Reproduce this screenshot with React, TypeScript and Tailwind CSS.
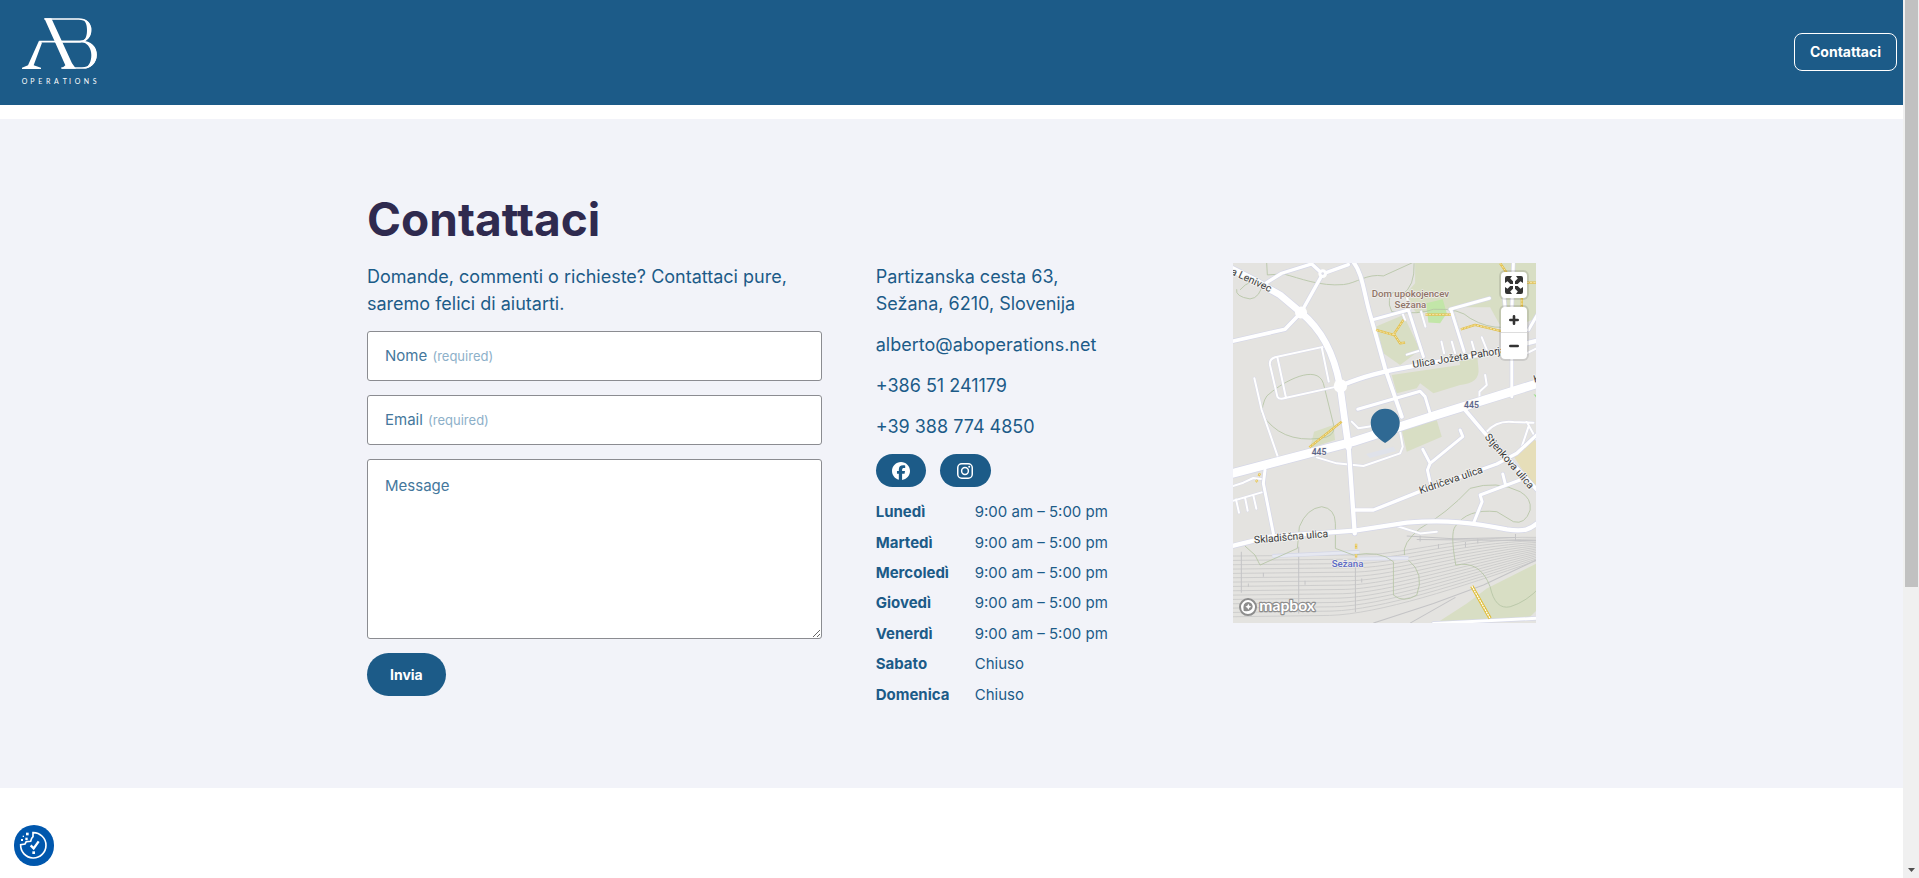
import { FaFacebook } from 'react-icons/fa6';

const hours = [
  { day: 'Lunedì', time: '9:00 am – 5:00 pm' },
  { day: 'Martedì', time: '9:00 am – 5:00 pm' },
  { day: 'Mercoledì', time: '9:00 am – 5:00 pm' },
  { day: 'Giovedì', time: '9:00 am – 5:00 pm' },
  { day: 'Venerdì', time: '9:00 am – 5:00 pm' },
  { day: 'Sabato', time: 'Chiuso' },
  { day: 'Domenica', time: 'Chiuso' },
];

const Logo = () => {
  return (
    <svg viewBox="60 42 240 225" className="h-[75px] w-20" fill="none" stroke="#fff" role="img" aria-label="AB Operations">
      <path d="M133 57H236C258 57 272 70 272 90C272 110 258 123 240 125H118" strokeWidth="5" />
      <path d="M184 125H245C272 125 288 142 288 164C288 188 270 204 246 204H184" strokeWidth="5" />
      <path d="M246 57C264 59 273 73 273 90C273 107 264 120 252 125C276 127 290 144 290 164C290 186 276 202 255 206C268 196 274 184 274 165C274 146 265 132 248 125C258 117 261 106 261 90C261 73 256 62 246 57Z" fill="#fff" stroke="none" />
      <path d="M133 55H154L216 190L228 206H184L196 196Z" fill="#fff" stroke="none" />
      <path d="M117 122L84 196L66 203V207H123V203L101 196L126 128Z" fill="#fff" stroke="none" />
      <text
        x="65 91 115 138 162 188 207 224 251 278"
        y="252"
        fill="#fff"
        stroke="none"
        fontSize="21"
        className="font-['Lato']">
        OPERATIONS
      </text>
    </svg>
  );
};

export const Header = () => {
  return (
    <header className="flex items-center justify-between bg-[#1c5b88] pt-3.5 pr-1.5 pb-4 pl-5">
      <a href="#">
        <Logo />
      </a>
      <a
        href="#contatti"
        className="rounded-lg border border-white px-[15px] text-sm leading-9 font-bold text-white">
        Contattaci
      </a>
    </header>
  );
};

const Field = ({ id, label, type }: { id: string; label: string; type: string }) => {
  return (
    <div className="flex h-[50px] items-center rounded-[3px] border border-[#8b8c91] bg-white px-[17px]">
      <label htmlFor={id} className="text-[15px] text-[#44779c]">
        {label} <span className="ml-px text-[13px] text-[#8db0c9]">(required)</span>
      </label>
      <input id={id} type={type} required className="min-w-0 flex-1 self-stretch outline-none" />
    </div>
  );
};

const ContactForm = () => {
  return (
    <form className="flex flex-col items-start gap-3.5">
      <p>
        Domande, commenti o richieste? Contattaci pure, saremo felici di aiutarti.
      </p>
      <div className="flex w-full flex-col gap-3.5">
        <Field id="nome" label="Nome" type="text" />
        <Field id="email" label="Email" type="email" />
        <div className="relative">
          <label htmlFor="message" className="absolute top-[15px] left-[18px] text-[15px] leading-6 text-[#44779c]">
            Message
          </label>
          <textarea
            id="message"
            className="block h-[180px] w-full resize rounded-[3px] border border-[#8b8c91] bg-white px-[17px] py-3.5 outline-none"
          />
        </div>
      </div>
      <button type="submit" className="h-[43px] rounded-full bg-[#1c5b88] px-[23px] text-sm font-bold text-white">
        Invia
      </button>
    </form>
  );
};

const ContactInfo = () => {
  return (
    <div className="flex flex-col gap-3.5">
      <p>
        Partizanska cesta 63,
        <br />
        Sežana, 6210, Slovenija
      </p>
      <a href="mailto:alberto@aboperations.net">alberto@aboperations.net</a>
      <a href="tel:+38651241179">+386 51 241179</a>
      <a href="tel:+393887744850">+39 388 774 4850</a>
      <div className="flex gap-3.5">
        <a
          href="#"
          aria-label="Facebook"
          className="flex h-[33px] w-[50px] items-center justify-center rounded-full bg-[#1c5b88] text-white">
          <FaFacebook size={18} />
        </a>
        <a
          href="#"
          aria-label="Instagram"
          className="flex h-[33px] w-[51px] items-center justify-center rounded-full bg-[#1c5b88] text-white">
          <svg viewBox="0 0 16 16" className="size-4" fill="none" stroke="currentColor" strokeWidth="1.5">
            <rect x="0.75" y="0.75" width="14.5" height="14.5" rx="4" />
            <circle cx="8" cy="8" r="3.4" />
            <circle cx="12.2" cy="3.8" r="1" fill="currentColor" stroke="none" />
          </svg>
        </a>
      </div>
      <table className="-mt-1 h-[213px] self-start text-[15px] leading-6">
        <tbody>
          {hours.map(({ day, time }) => (
            <tr key={day}>
              <th scope="row" className="w-[99px] text-left font-bold">
                {day}
              </th>
              <td>{time}</td>
            </tr>
          ))}
        </tbody>
      </table>
    </div>
  );
};

// main roads, drawn as a pale casing with a white line on top
const roads = [
  { d: 'M20 50L100 90L180 135L243 188C300 235 340 300 360 408L385 590', w: 20 },
  { d: 'M0 680L400 575L640 498L980 392', w: 26 },
  { d: 'M243 188L308 72L385 44', w: 10 },
  { d: 'M308 72L275 42L185 70L140 98', w: 10 },
  { d: 'M20 278L195 238L243 188', w: 11 },
  { d: 'M395 30C430 70 430 130 452 200L495 355L545 500', w: 12 },
  { d: 'M360 408C430 380 480 365 600 345L800 310L960 270', w: 13 },
  { d: 'M385 580L404 850', w: 13 },
  { d: 'M20 892L150 860L404 842L560 818C680 808 760 818 860 838C910 846 930 840 960 812', w: 13 },
  { d: 'M404 780H460L600 724L830 642L890 610L960 545', w: 10 },
  { d: 'M455 210L565 180L610 320', w: 9 },
  { d: 'M690 178L808 145M692 178L732 305', w: 9 },
  { d: 'M875 440V180L880 30', w: 9 },
  { d: 'M413 478L600 424L615 440L630 490', w: 9 },
  { d: 'M735 480L790 545L960 730', w: 11 },
  { d: 'M608 598L630 640L728 560L720 540M630 640L622 660L632 705', w: 9 },
  { d: 'M760 820L786 755L780 735L900 690M855 700L848 672', w: 9 },
  { d: 'M160 850L130 700L135 660', w: 9 },
  { d: 'M640 1120L960 1104M925 240L960 180M850 120L855 175', w: 9 },
];

const lanes = [
  'M312 290L165 322Q147 328 150 345L172 440Q178 450 195 444L350 410M172 322L198 444M305 292L326 395',
  'M103 385L125 480L175 625M39 752L125 727M48 748L57 788M75 742L83 782M100 736L109 776M39 708L70 698L100 684L130 688',
  'M290 622L350 640L430 648L540 610L548 590L540 545M395 515L415 535L520 518',
  'M800 545Q830 510 880 516L940 518M920 516L950 570M905 590L925 530',
  'M603 185L616 230M664 275L672 310M695 275L705 310M785 262L800 300M755 275L765 310M560 314L605 300M795 375L800 405L778 425V445',
  'M530 828L600 850L650 845M545 185L555 210M560 140L570 180M900 320L960 290',
];

const trails = [
  'M140 39L142 75L190 72C240 85 300 110 370 104C410 100 440 70 490 78L578 38',
  'M60 120Q90 85 130 95Q120 145 90 147Q45 140 50 118',
  'M582 40Q585 110 545 135Q505 110 508 165L515 185Q600 195 640 178Q720 175 750 205Q800 235 850 232',
  'M150 430C190 395 290 340 310 400L342 530Q345 560 300 565Q180 580 125 490Q130 440 150 430',
  'M75 888L105 915L120 945L232 895L238 830Q260 775 305 770Q345 775 346 820V895L400 915Q480 900 520 935V1035Q550 1060 590 1035Q615 970 565 930',
  'M553 915Q545 880 600 835Q680 790 750 715Q830 690 900 725Q935 745 930 780Q915 825 880 815L830 785Q740 775 705 830Q690 850 707 945Q780 930 810 1010Q825 1080 870 1070Q920 1055 960 1010',
];

const footways = [
  'M468 240L520 255L550 210M520 250L540 280L555 278',
  'M722 238L765 225L850 245',
  'M905 175V140M840 40L880 98H960',
  'M268 592L365 515',
  'M408 881V897M408 912V922M120 670L116 678M108 690L112 696',
  'M616 194H692',
];

const yardTracks = Array.from({ length: 15 }, (_, i) => 918 + i * 13);

const parks = [
  'M585 38H960V200L850 245L720 240L700 175L590 190L550 140L585 100Z',
  'M468 230L550 195L600 300L540 345L490 310Z',
  'M515 375L720 345L715 320L770 305L775 355Q780 400 720 405L640 430L600 400L590 415L530 430Z',
  'M545 540L650 510L665 560L560 605Z',
  'M282 545L340 525L345 570L270 595Z',
  'M800 1015L960 935V1070L930 1100L640 1125L740 1060Z',
];

const Map = () => {
  return (
    <div className="relative h-[360px] overflow-hidden bg-[#e4e3e0]">
      <svg
        viewBox="39 39 909 1080"
        preserveAspectRatio="xMidYMid slice"
        className="size-full font-['Roboto']"
        fill="none"
        strokeLinejoin="round"
        role="img"
        aria-label="Mappa di Sežana">
        {parks.map((d) => (
          <path key={d} d={d} fill="#d8dec4" />
        ))}
        <path d="M618 160L668 148L680 190L660 220L625 218Z" fill="#c2e6a8" />
        <path d="M940 432L960 440V460Z" fill="#9be08a" />
        <path d="M878 615L960 555V720L920 680Z" fill="#e6deb9" />
        <path d="M700 172H810L850 245L740 300L720 240Z" fill="#e4e3e0" />

        {yardTracks.map((y, i) => (
          <path
            key={y}
            d={`M39 ${y}L${440 - i * 8} ${y - 4}C${560 - i * 6} ${y - 8} ${720} ${y - 60 - i * 2} 948 ${862 + i * 5}`}
            stroke="#c9c9c9"
            strokeWidth="2.5"
          />
        ))}
        <path d="M560 858L700 866L886 862M590 868L948 872M64 905V1028M236 890V1090M406 930V1086M460 1119L640 1060L790 1005L948 930M570 1119L706 1042" stroke="#c4c4c6" strokeWidth="3" />
        <path d="M600 856V874M655 882V895M736 876V892M773 865V880M886 852V872M130 968V980M255 992V1004M425 985V997M85 1000V1010" stroke="#c4c4c6" strokeWidth="3" />
        <path d="M157 918L418 906M410 926L565 924" stroke="#d3d6e6" strokeWidth="12" />
        <path d="M157 918L418 906M410 926L565 924" stroke="#e6e8f1" strokeWidth="8" />
        <path d="M438 612L520 590L528 603L450 624Z" fill="#dfe2ea" />

        {trails.map((d) => (
          <path key={d} d={d} stroke="#b5c4a4" strokeWidth="2.5" />
        ))}
        {lanes.map((d) => (
          <g key={d} strokeLinecap="round">
            <path d={d} stroke="#d9dae8" strokeWidth="9" />
            <path d={d} stroke="#fff" strokeWidth="6" />
          </g>
        ))}
        {roads.map(({ d, w }) => (
          <path key={d} d={d} stroke="#d5d7e8" strokeWidth={w + 4} strokeLinecap="round" />
        ))}
        {roads.map(({ d, w }) => (
          <path key={d} d={d} stroke="#fff" strokeWidth={w} strokeLinecap="round" />
        ))}
        <circle cx="308" cy="71" r="13" fill="#fff" />
        <circle cx="308" cy="71" r="4" fill="#dcdde8" />
        <circle cx="243" cy="188" r="18" fill="#fff" />
        <circle cx="361" cy="408" r="20" fill="#fff" />
        {footways.map((d) => (
          <g key={d}>
            <path d={d} stroke="#e2c04c" strokeWidth="7" />
            <path d={d} stroke="#fdf6da" strokeWidth="2" strokeDasharray="7 3" />
          </g>
        ))}
        <path d="M755 1008L810 1105" stroke="#e0bd35" strokeWidth="10" />
        <path d="M755 1008L810 1105" stroke="#fff" strokeWidth="4" strokeDasharray="6 2" />

        <g fontSize="31" fill="#3c3c3c" stroke="#f3f3f1" strokeWidth="5" className="[paint-order:stroke]">
          <text transform="translate(31 72) rotate(25)">a Lenivec</text>
          <text transform="translate(579 354) rotate(-9)">Ulica Jožeta Pahorja</text>
          <text transform="translate(601 732) rotate(-19)">Kidričeva ulica</text>
          <text transform="translate(792 562) rotate(49)">Stjenkova ulica</text>
          <text transform="translate(103 880) rotate(-5)">Skladiščna ulica</text>
          <text transform="translate(943 398) rotate(-15)">K</text>
        </g>
        <g fontSize="29" fontWeight="500" stroke="#f0efec" strokeWidth="4" className="[paint-order:stroke]">
          <g fill="#8f7468" textAnchor="middle">
            <text x="571" y="140">Dom upokojencev</text>
            <text x="571" y="173">Sežana</text>
          </g>
          <g fill="#5a6288" fontSize="26">
            <text x="732" y="473">445</text>
            <text x="275" y="616">445</text>
          </g>
          <text x="335" y="950" fill="#5d6bc5">Sežana</text>
        </g>

        <path
          d="M495 476C470 476 452 495 452 518C452 548 474 564 495 579C516 564 539 548 539 518C539 495 521 476 495 476Z"
          fill="#2f6993"
        />

        <circle cx="84" cy="1071" r="24" fill="#fff" stroke="#8d8d8d" strokeWidth="6" />
        <path d="M71 1083Q66 1058 84 1056Q98 1058 98 1070Q96 1086 71 1083Z" fill="#8d8d8d" />
        <path d="M85 1061L88 1067L94 1070L88 1073L85 1079L82 1073L76 1070L82 1067Z" fill="#fff" />
        <text
          x="118"
          y="1082"
          fontSize="47"
          fontWeight="700"
          fill="#fff"
          stroke="#8d8d8d"
          strokeWidth="7"
          className="font-['Lato'] [paint-order:stroke]">
          mapbox
        </text>
      </svg>

      <div className="absolute top-[9px] right-[9px] flex flex-col gap-[9px] text-[#333]">
        <button
          type="button"
          aria-label="Schermo intero"
          className="flex size-[26px] items-center justify-center rounded-sm bg-white shadow-[0_0_0_2px_rgba(0,0,0,0.1)]">
          <svg viewBox="0 0 18 18" className="size-[18px]" fill="currentColor">
            <path d="M0 7V2Q0 0 2 0H7L5.200 2.500L8 5.300V8H5.300L2.500 5.200Z" />
            <path d="M18 7V2Q18 0 16 0H11L12.800 2.500L10 5.300V8H12.700L15.500 5.200Z" />
            <path d="M0 11V16Q0 18 2 18H7L5.200 15.500L8 12.700V10H5.300L2.500 12.800Z" />
            <path d="M18 11V16Q18 18 16 18H11L12.800 15.500L10 12.700V10H12.700L15.500 12.800Z" />
          </svg>
        </button>
        <div className="flex flex-col divide-y divide-[#ddd] rounded-sm bg-white shadow-[0_0_0_2px_rgba(0,0,0,0.1)]">
          <button type="button" aria-label="Ingrandisci" className="flex size-[26px] items-center justify-center">
            <svg viewBox="0 0 10 10" className="size-2.5" stroke="currentColor" strokeWidth="2.6" strokeLinecap="round">
              <path d="M5 1.300V8.700M1.300 5H8.700" />
            </svg>
          </button>
          <button type="button" aria-label="Riduci" className="flex h-[26px] items-center justify-center">
            <svg viewBox="0 0 10 10" className="size-2.5" stroke="currentColor" strokeWidth="2.6" strokeLinecap="round">
              <path d="M1.300 5H8.700" />
            </svg>
          </button>
        </div>
      </div>
    </div>
  );
};

const CookieButton = () => {
  return (
    <button
      type="button"
      aria-label="Preferenze cookie"
      className="fixed bottom-3 left-3.5 h-[41px] w-10 rounded-full bg-[#0057ad]">
      <svg viewBox="42 135 120 123" className="size-full" fill="none" stroke="#fff" strokeWidth="5">
        <path d="M99 158A38 38 0 1 1 62 194L75 192L79 185L92 184L95 175L99 170Z" />
        <path d="M92 196L101 205L116 184" strokeWidth="7" />
        <g fill="#fff" stroke="none">
          <rect x="97" y="214" width="8" height="8" />
          <rect x="78" y="158" width="8" height="8" />
          <rect x="76" y="173" width="7" height="7" />
          <rect x="63" y="177" width="6" height="6" />
          <rect x="68" y="167" width="4" height="4" />
        </g>
      </svg>
    </button>
  );
};

// painted scroll track on the right edge of the window
const ScrollTrack = () => {
  return (
    <div aria-hidden="true" className="flex w-4 flex-col items-center justify-between bg-[#f0f0f0] pb-1.5">
      <div className="h-[67.3%] w-[13px] bg-[#c1c1c1]" />
      <svg viewBox="0 0 7 4" className="h-1 w-[7px]" fill="#505050">
        <path d="M0 0H7L3.500 4Z" />
      </svg>
    </div>
  );
};

export default function App() {
  return (
    <div className="flex min-h-screen bg-white font-['Inter',sans-serif] text-[#1c5b88]">
      <div className="min-w-0 flex-1">
        <Header />
        <section id="contatti" className="mt-3.5 bg-[#f2f3f9] px-6 pt-[72px] pb-[78px]">
          <div className="mx-auto max-w-[1169px]">
            <h1 className="text-[46px] leading-[56px] font-bold text-[#2f2a4f]">Contattaci</h1>
            <div className="mt-4 grid gap-[54px] text-lg leading-[27px] lg:grid-cols-[3fr_2fr_2fr]">
              <ContactForm />
              <ContactInfo />
              <Map />
            </div>
          </div>
        </section>
      </div>
      <ScrollTrack />
      <CookieButton />
    </div>
  );
}
